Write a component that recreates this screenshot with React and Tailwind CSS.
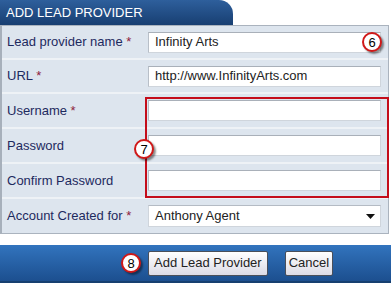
import React from 'react';

const rows = [
  { label: 'Lead provider name', req: true, value: 'Infinity Arts', h: 'h-[34px]' },
  { label: 'URL', req: true, value: 'http://www.InfinityArts.com', h: 'h-[34px]' },
  { label: 'Username', req: true, value: '', h: 'h-[35px]' },
  { label: 'Password', req: false, value: '', h: 'h-[35px]' },
  { label: 'Confirm Password', req: false, value: '', h: 'h-[35px]' },
];

function Marker({ n, className }) {
  return (
    <div
      className={`absolute w-[20px] h-[20px] rounded-full bg-white border-2 border-[#d01818] flex items-center justify-center text-[13px] leading-none text-black shadow-[2px_2px_2px_rgba(0,0,0,0.45)] ${className}`}
    >
      {n}
    </div>
  );
}

function Field({ children }) {
  return (
    <div className="w-[233px] h-[21px] bg-white border border-[#cfd5dc] border-t-[#a9b0b9] border-l-[#b8bfc8] flex items-center pl-[6px] text-[13px] text-[#222]">
      {children}
    </div>
  );
}

export default function App() {
  return (
    <div className="relative w-[391px] h-[283px] bg-white overflow-hidden font-['Liberation_Sans',Arial,sans-serif]">
      {/* tab header */}
      <div className="w-[233px] h-[25px] rounded-tr-[14px] bg-gradient-to-b from-[#2e5f9c] to-[#183f72] text-white text-[13px] leading-[25px] pl-[6px]">
        ADD LEAD PROVIDER
      </div>

      {/* form panel */}
      <div className="w-[389px] bg-[#dde5ee] border-t border-l-2 border-r border-b border-[#aab3be] border-l-[#a7b0bb]">
        {rows.map((r) => (
          <div key={r.label} className={`flex items-center ${r.h} border-b-2 border-[#eef2f6]`}>
            <div className="w-[146px] pl-[5px] text-[13px] text-[#1d2a5e]">
              {r.label}
              {r.req && <span className="text-[#8e1d3d]"> *</span>}
            </div>
            <Field>{r.value}</Field>
          </div>
        ))}
        <div className="flex items-center h-[34px]">
          <div className="w-[146px] pl-[5px] text-[13px] text-[#1d2a5e]">
            Account Created for <span className="text-[#8e1d3d]">*</span>
          </div>
          <div className="w-[233px] h-[22px] bg-white border border-[#cfd5dc] border-t-[#b4bbc4] flex items-center justify-between pl-[6px] pr-[5px] text-[13px] text-[#222]">
            <span>Anthony Agent</span>
            <svg width="9" height="5" viewBox="0 0 9 5">
              <path d="M0 0h9L4.5 5z" fill="#111" />
            </svg>
          </div>
        </div>
      </div>

      {/* footer */}
      <div className="mt-[11px] h-[38px] bg-gradient-to-b from-[#3274be] to-[#1c4f8f] border-b-2 border-[#163f70] flex items-center gap-[17px] pl-[148px]">
        <button className="h-[25px] px-[5px] bg-gradient-to-b from-white to-[#dcdbe6] border border-[#4a4f5a] rounded-[2px] text-[13px] text-[#222]">
          Add Lead Provider
        </button>
        <button className="h-[25px] px-[3px] bg-gradient-to-b from-white to-[#dcdbe6] border border-[#4a4f5a] rounded-[2px] text-[13px] text-[#222]">
          Cancel
        </button>
      </div>

      {/* highlight box and callouts */}
      <div className="absolute left-[145px] top-[97px] w-[244px] h-[101px] border-2 border-[#c40d1a]" />
      <Marker n="6" className="left-[362px] top-[32px]" />
      <Marker n="7" className="left-[134px] top-[139px]" />
      <Marker n="8" className="left-[121px] top-[253px]" />
    </div>
  );
}
